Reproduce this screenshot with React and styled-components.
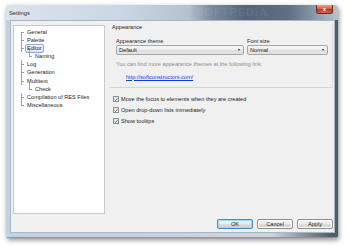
import React from "react";
import styled, { createGlobalStyle, css } from "styled-components";

const Global = createGlobalStyle`
  html, body { margin: 0; padding: 0; background: #ffffff; }
  body { font-family: "Liberation Sans", Arial, sans-serif; font-size: 5.6px; color: #1e1e1e; }
  * { box-sizing: border-box; }
`;

const Page = styled.div`
  width: 350px;
  height: 247px;
  padding: 5px 0 0 6px;
`;

const Window = styled.div`
  width: 332px;
  height: 233px;
  display: flex;
  flex-direction: column;
  border-radius: 4px 4px 2px 2px;
  background: #c7d4e2;
  box-shadow: 1px 2px 5px rgba(0,0,0,0.45);
  overflow: hidden;
`;

const TitleBar = styled.div`
  height: 15px;
  flex: none;
  display: flex;
  align-items: center;
  padding-left: 3px;
  position: relative;
  background: linear-gradient(90deg, #dbe4ee 0%, #cad6e3 35%, #b4c1cf 55%, #7b8b9b 62%, #56667a 72%, #5f6f80 85%, #8a99a8 93%, #b8c3ce 100%);
`;

const Title = styled.span`
  font-size: 5.8px;
  color: #1a1a1a;
  text-shadow: 0 0 3px #ffffff;
`;

const Watermark = styled.span`
  position: absolute;
  left: 190px;
  top: 1px;
  font-size: 11px;
  font-weight: bold;
  letter-spacing: 1px;
  color: rgba(255,255,255,0.07);
`;

const CloseBtn = styled.div`
  position: absolute;
  right: 5px;
  top: 0;
  width: 17px;
  height: 9px;
  border-radius: 0 0 3px 3px;
  border: 1px solid #6b2a1e;
  border-top: none;
  background: linear-gradient(180deg, #e8a190 0%, #d4644c 45%, #c0391f 55%, #d2674f 100%);
  display: flex;
  align-items: center;
  justify-content: center;
  color: #ffffff;
  font-size: 6px;
  font-weight: bold;
`;

const FrameBody = styled.div`
  flex: 1;
  display: flex;
  padding: 0 3px 4px 4px;
  background: linear-gradient(90deg, #c3d1e1 0%, #c3d1e1 4%, #c9d5e2 80%, #4f5d6b 98%);
  border-bottom: 1px solid #6a9ad8;
`;

const Client = styled.div`
  flex: 1;
  background: #f0f0f0;
  border: 1px solid #a8b6c5;
  display: flex;
  flex-direction: column;
  padding: 2px 1px 3px 2px;
`;

const Main = styled.div`
  flex: 1;
  display: flex;
  gap: 4px;
`;

const Tree = styled.div`
  width: 92px;
  margin-top: 2px;
  background: #ffffff;
  border: 1px solid #c9c9c9;
  padding: 1.5px 0 0 0;
  display: flex;
  flex-direction: column;
`;

const TreeRow = styled.div`
  position: relative;
  height: 8.2px;
  line-height: 8.2px;
  padding-left: ${p => (p.$level === 1 ? 19 : 11)}px;
  white-space: nowrap;

  &::before {
    content: "";
    position: absolute;
    left: ${p => (p.$level === 1 ? 15 : 7)}px;
    top: 4px;
    width: 3px;
    border-top: 1px solid #a0a0a0;
  }
  &::after {
    content: "";
    position: absolute;
    left: ${p => (p.$level === 1 ? 15 : 7)}px;
    top: ${p => (p.$level === 1 ? -2 : 0)}px;
    height: ${p => (p.$last ? (p.$level === 1 ? 6 : 4.5) : 8.2)}px;
    ${p => p.$first && p.$level === 0 && css`top: 4px; height: 4.2px;`}
    border-left: 1px solid #a0a0a0;
  }
`;

const TreeLabel = styled.span`
  display: inline-block;
  padding: 0 1px;
  line-height: 7px;
  border: 1px solid transparent;
  border-radius: 2px;
  ${p => p.$selected && css`
    border-color: #84acdd;
    background: linear-gradient(180deg, #f2f8fe 0%, #d6e8fb 100%);
  `}
`;

const Right = styled.div`
  flex: 1;
  display: flex;
  flex-direction: column;
`;

const Section = styled.div`
  height: 65px;
  border-right: 1px solid #dcdcdc;
  border-bottom: 1px solid #d5d5d5;
  padding: 0 0 0 3px;
  display: flex;
  flex-direction: column;
`;

const SectionTitle = styled.div`
  height: 8px;
  line-height: 8px;
`;

const Fields = styled.div`
  display: flex;
  gap: 3px;
  margin-top: 7px;
  padding-left: 4px;
`;

const Field = styled.div`
  display: flex;
  flex-direction: column;
  width: ${p => p.$w}px;
`;

const FieldLabel = styled.div`
  height: 6px;
  line-height: 6px;
`;

const Combo = styled.div`
  margin-top: 1px;
  height: 10px;
  border: 1px solid #a6a6a6;
  border-radius: 2px;
  background: linear-gradient(180deg, #f6f6f6 0%, #ececec 50%, #dfdfdf 51%, #e4e4e4 100%);
  display: flex;
  align-items: center;
  justify-content: space-between;
  padding: 0 3px 0 2px;
`;

const Arrow = styled.span`
  width: 0;
  height: 0;
  border-left: 1.5px solid transparent;
  border-right: 1.5px solid transparent;
  border-top: 2px solid #222;
`;

const Hint = styled.div`
  margin-top: 5px;
  padding-left: 4px;
  color: #8d8d8d;
  line-height: 8px;
`;

const Link = styled.a`
  margin-top: 5.5px;
  padding-left: 14px;
  color: #0b3fd8;
  text-decoration: underline;
  line-height: 7px;
`;

const Checks = styled.div`
  display: flex;
  flex-direction: column;
  gap: 4px;
  padding: 7.5px 0 0 4px;
`;

const CheckRow = styled.label`
  display: flex;
  align-items: center;
  gap: 2px;
  height: 7px;
`;

const Box = styled.span`
  width: 6px;
  height: 6px;
  border: 1px solid #8f8f8f;
  background: linear-gradient(180deg, #e3e3e3, #f8f8f8);
  display: flex;
  align-items: center;
  justify-content: center;
`;

const Buttons = styled.div`
  display: flex;
  justify-content: flex-end;
  gap: 4px;
  padding: 5px 0 0 0;
  height: 10px;
  box-sizing: content-box;
`;

const Button = styled.div`
  width: 36px;
  height: 10px;
  display: flex;
  align-items: center;
  justify-content: center;
  border: 1px solid ${p => (p.$default ? "#3d8ed0" : "#8e8e8e")};
  border-radius: 2px;
  background: linear-gradient(180deg, #f3f3f3 0%, #ebebeb 50%, #dddddd 51%, #cfcfcf 100%);
  box-shadow: ${p => (p.$default ? "inset 0 0 0 1px #a6d8f4" : "inset 0 0 0 1px #fcfcfc")};
`;

const Check = () => (
  <Box>
    <svg width="5" height="5" viewBox="0 0 5 5">
      <path d="M0.8 2.6 L2 3.8 L4.3 0.9" fill="none" stroke="#3a4f7a" strokeWidth="0.9" />
    </svg>
  </Box>
);

const treeItems = [
  { label: "General", level: 0, first: true },
  { label: "Palette", level: 0 },
  { label: "Editor", level: 0, selected: true },
  { label: "Naming", level: 1, last: true },
  { label: "Log", level: 0 },
  { label: "Generation", level: 0 },
  { label: "Multitext", level: 0 },
  { label: "Check", level: 1, last: true },
  { label: "Compilation of RES Files", level: 0 },
  { label: "Miscellaneous", level: 0, last: true },
];

export default function App() {
  return (
    <>
      <Global />
      <Page>
        <Window>
          <TitleBar>
            <Title>Settings</Title>
            <Watermark>SOFTPEDIA</Watermark>
            <CloseBtn>x</CloseBtn>
          </TitleBar>
          <FrameBody>
            <Client>
              <Main>
                <Tree>
                  {treeItems.map((t) => (
                    <TreeRow key={t.label} $level={t.level} $last={t.last} $first={t.first}>
                      <TreeLabel $selected={t.selected}>{t.label}</TreeLabel>
                    </TreeRow>
                  ))}
                </Tree>
                <Right>
                  <Section>
                    <SectionTitle>Appearance</SectionTitle>
                    <Fields>
                      <Field $w={128}>
                        <FieldLabel>Appearance theme</FieldLabel>
                        <Combo>Default<Arrow /></Combo>
                      </Field>
                      <Field $w={81}>
                        <FieldLabel>Font size</FieldLabel>
                        <Combo>Normal<Arrow /></Combo>
                      </Field>
                    </Fields>
                    <Hint>You can find more appearance themes at the following link:</Hint>
                    <Link>http://softconstructors.com/</Link>
                  </Section>
                  <Checks>
                    <CheckRow><Check />Move the focus to elements when they are created</CheckRow>
                    <CheckRow><Check />Open drop-down lists immediately</CheckRow>
                    <CheckRow><Check />Show tooltips</CheckRow>
                  </Checks>
                </Right>
              </Main>
              <Buttons>
                <Button $default>OK</Button>
                <Button>Cancel</Button>
                <Button>Apply</Button>
              </Buttons>
            </Client>
          </FrameBody>
        </Window>
      </Page>
    </>
  );
}
